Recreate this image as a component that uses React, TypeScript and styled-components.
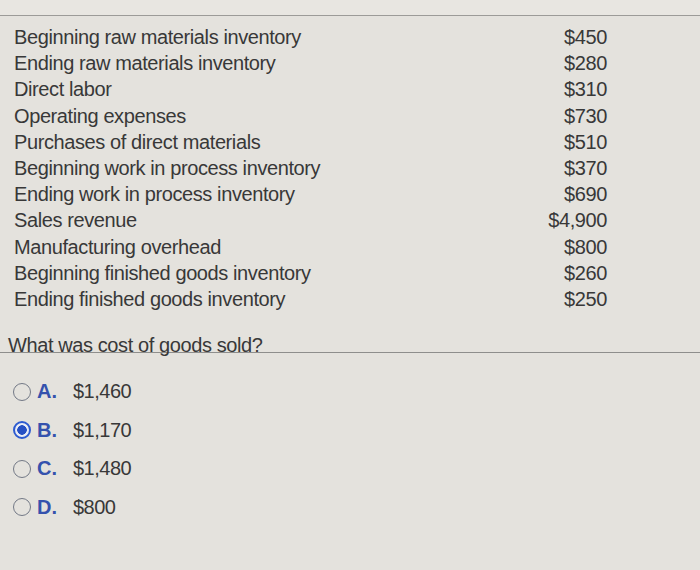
import React from "react";
import styled, { createGlobalStyle } from "styled-components";

const GlobalStyle = createGlobalStyle`
  html, body {
    margin: 0;
    padding: 0;
    background: #e4e2dd;
  }
  body {
    font-family: "Liberation Sans", Arial, sans-serif;
    color: #3a3a3a;
  }
`;

const Page = styled.div`
  width: 700px;
  height: 570px;
  background: #e4e2dd;
  overflow: hidden;
`;

const TopBand = styled.div`
  height: 15px;
  background: #e8e6e1;
  border-bottom: 1px solid #9c9b98;
`;

const DataTable = styled.div`
  display: grid;
  grid-template-columns: 1fr auto;
  padding: 8px 93px 0 14px;
  font-size: 20px;
  line-height: 26.2px;
  letter-spacing: -0.4px;
`;

const Label = styled.div`
  color: #383838;
`;

const Amount = styled.div`
  text-align: right;
  color: #383838;
`;

const Question = styled.div`
  margin-top: 21px;
  height: 19px;
  padding-left: 8px;
  font-size: 20px;
  line-height: 24px;
  letter-spacing: -0.4px;
  color: #383838;
  border-bottom: 1px solid #8e8e8c;
`;

const Options = styled.div`
  display: flex;
  flex-direction: column;
  padding: 19px 0 0 13px;
`;

const Option = styled.label`
  display: flex;
  align-items: center;
  height: 38.6px;
  font-size: 20px;
`;

const Radio = styled.span<{ $checked?: boolean }>`
  box-sizing: border-box;
  width: 18px;
  height: 18px;
  border-radius: 50%;
  border: ${(p) => (p.$checked ? "2px solid #2d5bd0" : "1.5px solid #737986")};
  background: ${(p) => (p.$checked ? "radial-gradient(circle, #2650c4 0 4.5px, #e9ecf5 5px)" : "transparent")};
  flex-shrink: 0;
`;

const Letter = styled.span`
  color: #3552ad;
  font-weight: bold;
  width: 36px;
  margin-left: 6px;
`;

const Value = styled.span`
  color: #383838;
  letter-spacing: -0.5px;
`;

const rows: [string, string][] = [
  ["Beginning raw materials inventory", "$450"],
  ["Ending raw materials inventory", "$280"],
  ["Direct labor", "$310"],
  ["Operating expenses", "$730"],
  ["Purchases of direct materials", "$510"],
  ["Beginning work in process inventory", "$370"],
  ["Ending work in process inventory", "$690"],
  ["Sales revenue", "$4,900"],
  ["Manufacturing overhead", "$800"],
  ["Beginning finished goods inventory", "$260"],
  ["Ending finished goods inventory", "$250"],
];

const choices = [
  { letter: "A.", value: "$1,460" },
  { letter: "B.", value: "$1,170", checked: true },
  { letter: "C.", value: "$1,480" },
  { letter: "D.", value: "$800" },
];

export default function App() {
  return (
    <Page>
      <GlobalStyle />
      <TopBand />
      <DataTable>
        {rows.map(([label, amount]) => (
          <React.Fragment key={label}>
            <Label>{label}</Label>
            <Amount>{amount}</Amount>
          </React.Fragment>
        ))}
      </DataTable>
      <Question>What was cost of goods sold?</Question>
      <Options>
        {choices.map((c) => (
          <Option key={c.letter}>
            <Radio $checked={c.checked} />
            <Letter>{c.letter}</Letter>
            <Value>{c.value}</Value>
          </Option>
        ))}
      </Options>
    </Page>
  );
}
